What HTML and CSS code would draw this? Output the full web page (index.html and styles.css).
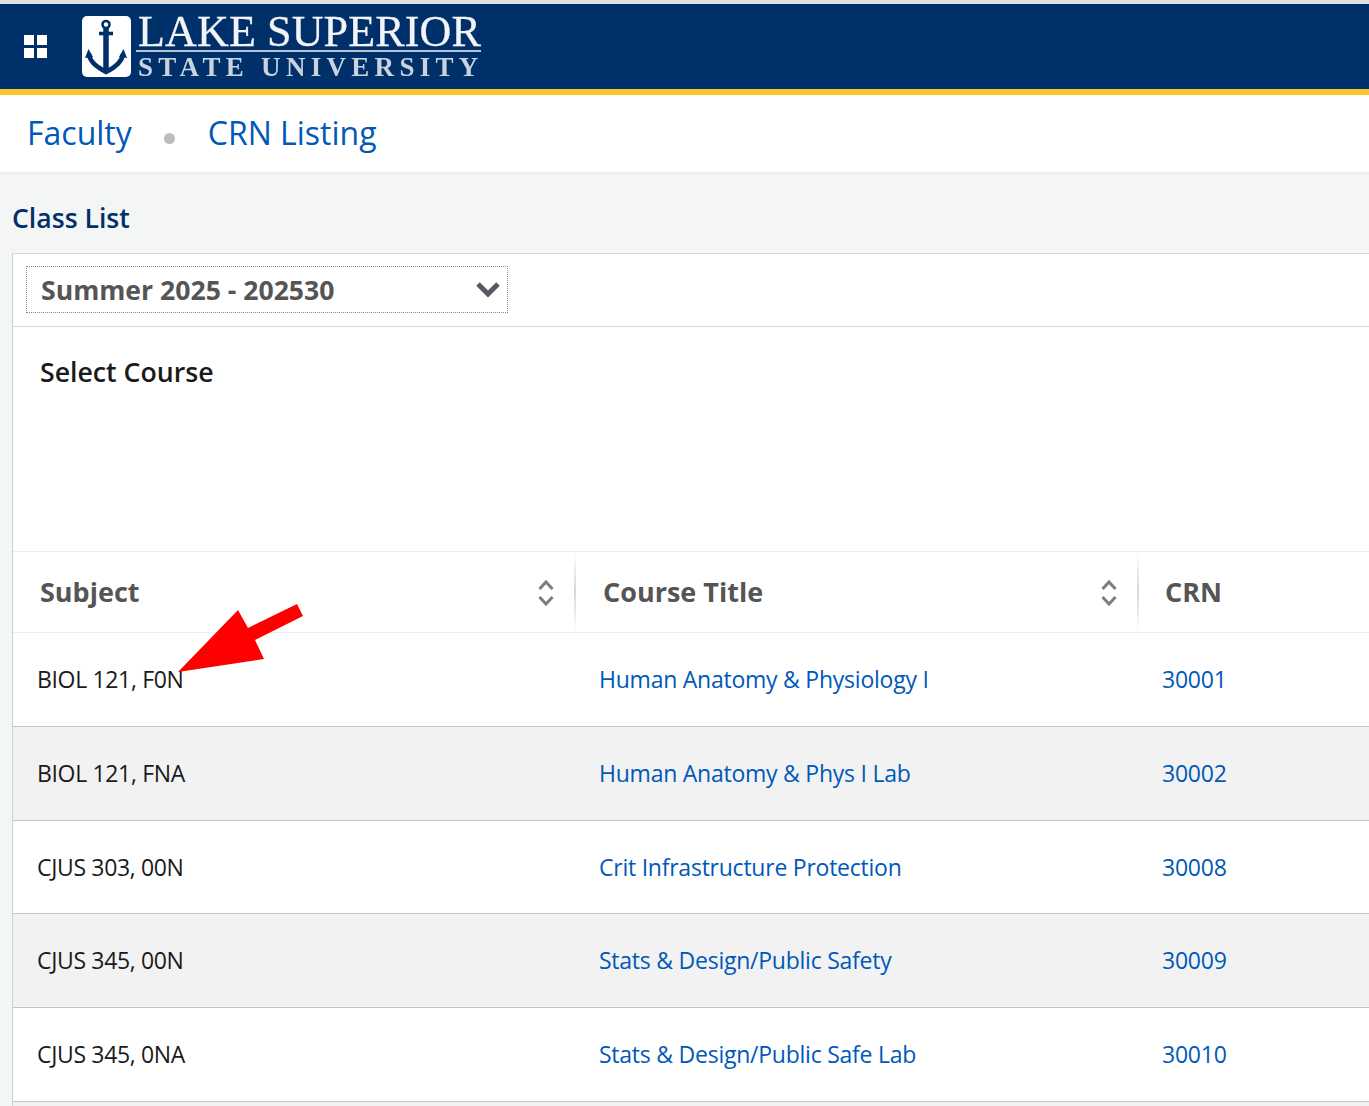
FILE: index.html
```html
<!DOCTYPE html>
<html lang="en">
<head>
<meta charset="utf-8">
<title>Class List</title>
<link rel="stylesheet" href="styles.css">
</head>
<body>
<header class="topbar">
  <div class="apps"><i></i><i></i><i></i><i></i></div>
  <div class="logo">
    <div class="crest">
      <svg viewBox="0 0 49 61" width="49" height="61">
        <g fill="none" stroke="#003069">
          <circle cx="24" cy="8.500" r="3.500" stroke-width="2.600"/>
          <path d="M24 12V55" stroke-width="5.500"/>
          <path d="M17 17.500H31" stroke-width="3.600"/>
          <path d="M7 38C8 47 17 52 24 56C32 52 40 47 41 38" stroke-width="4.600"/>
        </g>
        <path d="M3 42L6.500 33L11 41ZM37 41L41.500 33L45 42Z" fill="#003069"/>
      </svg>
    </div>
    <div class="wordmark">
      <div class="wm-top">LAKE SUPERIOR</div>
      <div class="wm-bottom">STATE UNIVERSITY</div>
    </div>
  </div>
</header>
<nav class="crumbs">
  <a href="#">Faculty</a>
  <span class="dot"></span>
  <a href="#">CRN Listing</a>
</nav>
<main class="content">
  <h1 class="title">Class List</h1>
  <section class="panel">
    <div class="term-row">
      <div class="term">
        <span>Summer 2025 - 202530</span>
        <svg class="caret" viewBox="0 0 26 18" width="26" height="18"><path d="M3 4L13 14L23 4" fill="none" stroke="#555a60" stroke-width="5"/></svg>
      </div>
    </div>
    <div class="select-block"><h2>Select Course</h2></div>
    <table class="grid">
      <colgroup><col class="c1"><col class="c2"><col class="c3"></colgroup>
      <thead>
        <tr>
          <th><div class="th-in"><span>Subject</span><svg class="sort" viewBox="0 0 16 27" width="16" height="27"><path d="M1.5 10L8 3L14.500 10M1.500 18L8 25L14.500 18" fill="none" stroke="#7a7d85" stroke-width="3"/></svg></div></th>
          <th><div class="th-in"><span>Course Title</span><svg class="sort" viewBox="0 0 16 27" width="16" height="27"><path d="M1.5 10L8 3L14.500 10M1.500 18L8 25L14.500 18" fill="none" stroke="#7a7d85" stroke-width="3"/></svg></div></th>
          <th><div class="th-in"><span>CRN</span></div></th>
        </tr>
      </thead>
      <tbody>
        <tr><td>BIOL 121, F0N</td><td><a href="#">Human Anatomy &amp; Physiology I</a></td><td><a href="#">30001</a></td></tr>
        <tr><td>BIOL 121, FNA</td><td><a href="#">Human Anatomy &amp; Phys I Lab</a></td><td><a href="#">30002</a></td></tr>
        <tr><td>CJUS 303, 00N</td><td><a href="#">Crit Infrastructure Protection</a></td><td><a href="#">30008</a></td></tr>
        <tr><td>CJUS 345, 00N</td><td><a href="#">Stats &amp; Design/Public Safety</a></td><td><a href="#">30009</a></td></tr>
        <tr><td>CJUS 345, 0NA</td><td><a href="#">Stats &amp; Design/Public Safe Lab</a></td><td><a href="#">30010</a></td></tr>
        <tr><td>&nbsp;</td><td></td><td></td></tr>
      </tbody>
    </table>
  </section>
</main>
<svg class="arrow" viewBox="0 0 140 80" width="140" height="80"><polygon points="3,70 63,8 73,26 122,2 128,14 80,38 89,57" fill="#ff0000"/></svg>
</body>
</html>
```
FILE: styles.css
```css
* { box-sizing: border-box; }
html, body { margin: 0; height: 1106px; overflow: hidden; }
body {
  position: relative;
  background: #f4f6f5;
  font-family: "Open Sans", "Noto Sans", sans-serif;
  color: #1a1a1a;
  border-top: 4px solid #dfe0e2;
}
a { color: #0059b8; text-decoration: none; }

.topbar {
  height: 85px;
  background: #003069;
  display: flex;
  align-items: center;
  padding-left: 24px;
}
.apps {
  display: grid;
  grid-template-columns: 10px 10px;
  grid-auto-rows: 10px;
  gap: 3px;
  margin-top: -1px;
}
.apps i { background: #fff; }
.logo { display: flex; margin-left: 35px; margin-top: 2px; align-items: flex-start; filter: blur(0.4px); }
.crest {
  width: 49px;
  height: 61px;
  margin-top: 3px;
  background: #fff;
  border-radius: 5px;
  display: flex;
}
.wordmark {
  margin-left: 5px;
  width: 345px;
  color: #f2f4f7;
  font-family: "Liberation Serif", serif;
}
.wm-top {
  font-size: 44px;
  line-height: 37px;
  height: 39px;
  padding-left: 2px;
  border-bottom: 2px solid #b9c4d6;
  white-space: nowrap;
  letter-spacing: 0.15px;
  -webkit-text-stroke: 0.3px #f2f4f7;
}
.wm-bottom {
  font-size: 27px;
  line-height: 31px;
  padding-left: 2px;
  letter-spacing: 5.3px;
  white-space: nowrap;
  color: #c9d2df;
  font-weight: 700;
}

.crumbs {
  height: 86px;
  background: #fff;
  border-top: 6px solid #fdc52c;
  border-bottom: 3px solid #eeeeee;
  display: flex;
  align-items: center;
  padding: 0 0 2px 27px;
  font-size: 32px;
}
.dot {
  width: 11px;
  height: 11px;
  border-radius: 50%;
  background: #bdbdbd;
  margin: 12px 33px 0 32px;
}

.content { padding: 23px 0 0 12px; }
.title {
  margin: 0;
  font-size: 26.6px;
  line-height: 40px;
  height: 55px;
  font-weight: 600;
  color: #003069;
}
.panel {
  width: 1500px;
  background: #fff;
  border-top: 1px solid #d5d9d9;
  border-left: 1px solid #c5d3df;
}
.term-row {
  height: 73px;
  padding: 12px 0 0 13px;
  border-bottom: 1px solid #d5d9d9;
}
.term {
  width: 482px;
  height: 47px;
  border: 1px dotted #888;
  display: flex;
  align-items: center;
  justify-content: space-between;
  padding: 0 6px 0 14px;
  font-size: 26.6px;
  font-weight: 700;
  color: #555;
}
.caret { margin-top: -2px; }
.select-block {
  height: 225px;
  padding: 23px 0 0 27px;
  border-bottom: 1px solid #eeeeee;
}
.select-block h2 {
  margin: 0;
  font-size: 26.7px;
  line-height: 44px;
  font-weight: 600;
  color: #1a1a1a;
}

.grid { width: 100%; border-collapse: collapse; table-layout: fixed; }
.c1 { width: 563px; }
.c2 { width: 563px; }
.grid th {
  height: 80px;
  padding: 0;
  text-align: left;
  font-size: 27px;
  font-weight: 700;
  color: #555;
  border-bottom: 1px solid #eeeeee;
}
.th-in {
  height: 79px;
  display: flex;
  align-items: center;
  justify-content: space-between;
  padding: 0 22px 0 27px;
  background: linear-gradient(#fff 0, #cfd8e2 50%, #fff 100%) right / 2px 100% no-repeat;
}
.grid th:last-child .th-in { background: none; padding-left: 26px; }
.sort { margin-top: 1px; }
.grid td {
  height: 94px;
  padding: 0 0 0 23px;
  font-size: 23px;
  border-bottom: 1px solid #c4c4c4;
  color: #1a1a1a;
  letter-spacing: -0.24px;
}
.grid td:first-child { padding-left: 24px; letter-spacing: -0.34px; }
.grid tbody tr:nth-child(3) td { height: 93px; }
.grid tbody tr:nth-child(even) td { background: #f2f2f2; }

.arrow { position: absolute; left: 175px; top: 598px; }
```
